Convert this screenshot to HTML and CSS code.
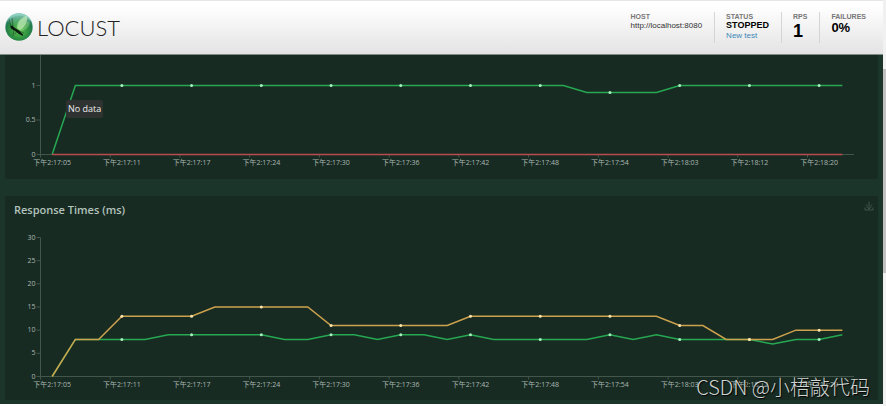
FILE: index.html
```
<!DOCTYPE html>
<html lang="en">
<head>
<meta charset="UTF-8">
<meta name="viewport" content="width=device-width, initial-scale=1.0">
<title>Locust</title>
<link rel="stylesheet" href="styles.css">
</head>
<body>
<div class="page">
    <header class="top">
        <div class="logo">
            <svg class="logo-ball" viewBox="0 0 28 28" aria-hidden="true">
                <defs>
                    <radialGradient id="ball" cx="50%" cy="60%" r="55%">
                        <stop offset="0" stop-color="#62c455"/>
                        <stop offset="0.6" stop-color="#2f9340"/>
                        <stop offset="0.88" stop-color="#23784f"/>
                        <stop offset="1" stop-color="#5fae9c"/>
                    </radialGradient>
                    <linearGradient id="shine" x1="0" y1="0" x2="0" y2="1">
                        <stop offset="0" stop-color="#9fe0d0" stop-opacity="0.8"/>
                        <stop offset="1" stop-color="#9fe0d0" stop-opacity="0"/>
                    </linearGradient>
                </defs>
                <circle cx="14" cy="14" r="13.7" fill="url(#ball)"/>
                <ellipse cx="14" cy="7" rx="11" ry="6.5" fill="url(#shine)"/>
                <path d="M12 15C12 9 16 4 22 3C23 8 20 14 15 17Z" fill="#c4edb8" opacity="0.7"/>
                <path d="M14 16C17 12 22 8 25 9C25 13 21 17 16 18Z" fill="#b5e5a5" opacity="0.35"/>
                <path d="M5 13.5L7 12.5L10 15L14 17.5L18 21.5L18 23L14 21L9.5 17.5L6.5 16Z" fill="#0b1a10"/>
                <path d="M6 13L4 6M8 13L7 5M9 16L8 23M12 18L10 21M14 18L19 20" fill="none" stroke="#0b1a10" stroke-width="0.4"/>
            </svg>
            <span class="logo-name">LOCUST</span>
        </div>
        <div class="boxes">
            <div class="box box-host">
                <div class="label">HOST</div>
                <div class="host">http://localhost:8080</div>
            </div>
            <div class="box box-status">
                <div class="label">STATUS</div>
                <div class="status">STOPPED</div>
                <a href="#new">New test</a>
            </div>
            <div class="box box-rps">
                <div class="label">RPS</div>
                <div class="rps">1</div>
            </div>
            <div class="box box-fail">
                <div class="label">FAILURES</div>
                <div class="failures">0%</div>
            </div>
        </div>
    </header>

    <main class="charts">
        <section class="panel panel-rps">
            <svg class="chart" id="rps-chart" viewBox="0 0 873 125" role="img" aria-label="Total Requests per Second"></svg>
            <div class="tooltip">No data</div>
        </section>
        <section class="panel">
            <div class="panel-head">
                <h2>Response Times (ms)</h2>
                <button class="save" type="button" aria-label="Save chart">
                    <svg viewBox="0 0 10 10">
                        <path d="M5 0.5V8M2.5 5.5L5 8L7.5 5.5M1 6.5V9H9V6.5M2 3.5L3.5 5M8 3.5L6.5 5" fill="none" stroke="#4c5d54" stroke-width="0.8"/>
                    </svg>
                </button>
            </div>
            <svg class="chart" id="times-chart" viewBox="0 0 873 179" role="img" aria-label="Response Times (ms)"></svg>
        </section>
    </main>
    <div class="watermark">CSDN @小梧敲代码</div>
</div>
<div class="scrollbar"><div class="thumb"></div></div>

<script>
    const times = ['2:17:05', '2:17:11', '2:17:17', '2:17:24', '2:17:30', '2:17:36',
        '2:17:42', '2:17:48', '2:17:54', '2:18:03', '2:18:12', '2:18:20'];
    const left = 35.5;
    const right = 849;
    const count = 35;
    const step = (right - left) / count;

    function line(x1, y1, x2, y2) {
        return `<line class="axis" x1="${x1}" y1="${y1}" x2="${x2}" y2="${y2}"/>`;
    }

    // zero = y of the x axis, unit = pixels per 1 on the y axis
    function drawChart(id, top, zero, unit, ticks, series) {
        let out = line(left, top, left, zero) + line(left, zero, right, zero);
        ticks.forEach(t => {
            const y = zero - t * unit;
            out += line(left - 4, y, left, y);
            out += `<text class="tick" text-anchor="end" x="${left - 5}" y="${y + 2}">${t}</text>`;
        });
        times.forEach((t, i) => {
            const x = left + i * 3 * step;
            out += line(x, zero, x, zero + 3);
            out += `<text class="tick" text-anchor="middle" x="${x + step / 2}" y="${zero + 10}">下午${t}</text>`;
        });
        series.forEach(s => {
            const pts = s.data.map((v, i) => [left + (i + 0.5) * step, zero - v * unit]);
            out += `<polyline class="line ${s.name}" points="${pts.join(' ')}"/>`;
            if (s.dots) {
                pts.forEach((p, i) => {
                    if (i > 0 && i % 3 === 0) {
                        out += `<circle class="dot ${s.name}" cx="${p[0]}" cy="${p[1]}" r="1.5"/>`;
                    }
                });
            }
        });
        document.getElementById(id).innerHTML = out;
    }

    const rps = Array(count).fill(1);
    rps[0] = 0;
    rps.fill(0.9, 23, 27);

    drawChart('rps-chart', 0, 100.5, 69, [0, 0.5, 1], [
        { name: 'green', dots: true, data: rps },
        { name: 'red', dots: false, data: Array(count).fill(0) }
    ]);

    drawChart('times-chart', 16.5, 155.5, 139 / 30, [0, 5, 10, 15, 20, 25, 30], [
        { name: 'green', dots: true, data: [0, 8, 8, 8, 8, 9, 9, 9, 9, 9, 8, 8, 9, 9, 8, 9, 9, 8,
            9, 8, 8, 8, 8, 8, 9, 8, 9, 8, 8, 8, 8, 7, 8, 8, 9] },
        { name: 'yellow', dots: true, data: [0, 8, 8, 13, 13, 13, 13, 15, 15, 15, 15, 15, 11, 11, 11, 11, 11, 11,
            13, 13, 13, 13, 13, 13, 13, 13, 13, 11, 11, 8, 8, 8, 10, 10, 10] }
    ]);
</script>
</body>
</html>
```
FILE: styles.css
```
* {
    box-sizing: border-box;
}
body {
    margin: 0;
    display: flex;
    min-height: 100vh;
    background: #f1f1f1;
    font-family: "Liberation Sans", Arial, sans-serif;
}
.page {
    position: relative;
    flex: 1;
    min-width: 0;
    background: #1b352b;
    border-bottom: 2px solid #fff;
}
.top {
    display: flex;
    justify-content: space-between;
    height: 54px;
    padding: 12px 17px 0 5px;
    background: linear-gradient(#fff 10%, #e3e3e3);
    border-top: 1px solid #e6e6e6;
    box-shadow: 0 1px 0 #7e8c86;
    position: relative;
    z-index: 1;
}
.logo {
    display: flex;
    gap: 4px;
    height: 28px;
    align-items: center;
}
.logo-ball {
    width: 28px;
    height: 28px;
}
.logo-name {
    font-family: Lato, sans-serif;
    font-weight: 300;
    font-size: 22px;
    color: #222;
}
.boxes {
    display: flex;
    height: 31px;
    margin-top: -1px;
    font-size: 8px;
    line-height: 9px;
}
.box {
    padding: 0 12px 0 11px;
    border-left: 1px solid #d5d5d5;
}
.box-host {
    border-left: 0;
}
.box-fail {
    padding-right: 0;
}
.label {
    font-size: 7px;
    line-height: 9px;
    font-weight: bold;
    color: #777;
}
.host {
    color: #333;
}
.status {
    font-size: 9px;
    line-height: 9px;
    font-weight: bold;
    color: #000;
}
.box a {
    display: block;
    color: #3b88b8;
    text-decoration: none;
    line-height: 11px;
}
.rps {
    font-size: 18px;
    line-height: 20px;
    font-weight: bold;
}
.failures {
    font-size: 13px;
    line-height: 14px;
    font-weight: bold;
}
.charts {
    display: flex;
    flex-direction: column;
    gap: 17px;
    padding: 0 5px 4px;
}
.panel {
    position: relative;
    background: #182b23;
    border-radius: 2px;
}
.panel-head {
    display: flex;
    justify-content: space-between;
    align-items: flex-start;
    height: 25px;
    padding: 5px 4px 0 9px;
}
.panel-head h2 {
    margin: 0;
    font-family: "Open Sans", sans-serif;
    font-size: 11px;
    line-height: 17px;
    font-weight: 600;
    color: #b3c3bc;
}
.save {
    width: 10px;
    height: 10px;
    padding: 0;
    border: 0;
    background: none;
    cursor: pointer;
}
.save svg,
.chart {
    display: block;
    width: 100%;
}
.axis {
    stroke: #42564c;
    stroke-width: 1;
}
.tick {
    font-family: "Open Sans", "Noto Sans CJK SC", sans-serif;
    font-size: 7px;
    fill: #a9b8b1;
}
.line {
    fill: none;
    stroke-width: 1.5;
}
.line.green {
    stroke: #26a852;
}
.line.red {
    stroke: #b84b50;
}
.line.yellow {
    stroke: #cda24c;
}
.dot.green {
    fill: #a5f0bd;
}
.dot.yellow {
    fill: #ffe3a8;
}
.tooltip {
    position: absolute;
    left: 61px;
    top: 46px;
    padding: 0 2px;
    border-radius: 2px;
    background: #2e3231;
    color: #eee;
    font-family: "Open Sans", sans-serif;
    font-size: 9px;
    line-height: 18px;
}
.watermark {
    position: absolute;
    right: 13px;
    bottom: 5px;
    font-family: "Noto Sans CJK SC", sans-serif;
    font-weight: 300;
    font-size: 20px;
    line-height: 24px;
    color: #d0d4d2;
    text-shadow: 1px 1px 1px #000;
}
.scrollbar {
    width: 3px;
    padding-top: 69px;
    background: #f1f1f1;
}
.thumb {
    height: 204px;
    background: #c1c1c1;
}
```
